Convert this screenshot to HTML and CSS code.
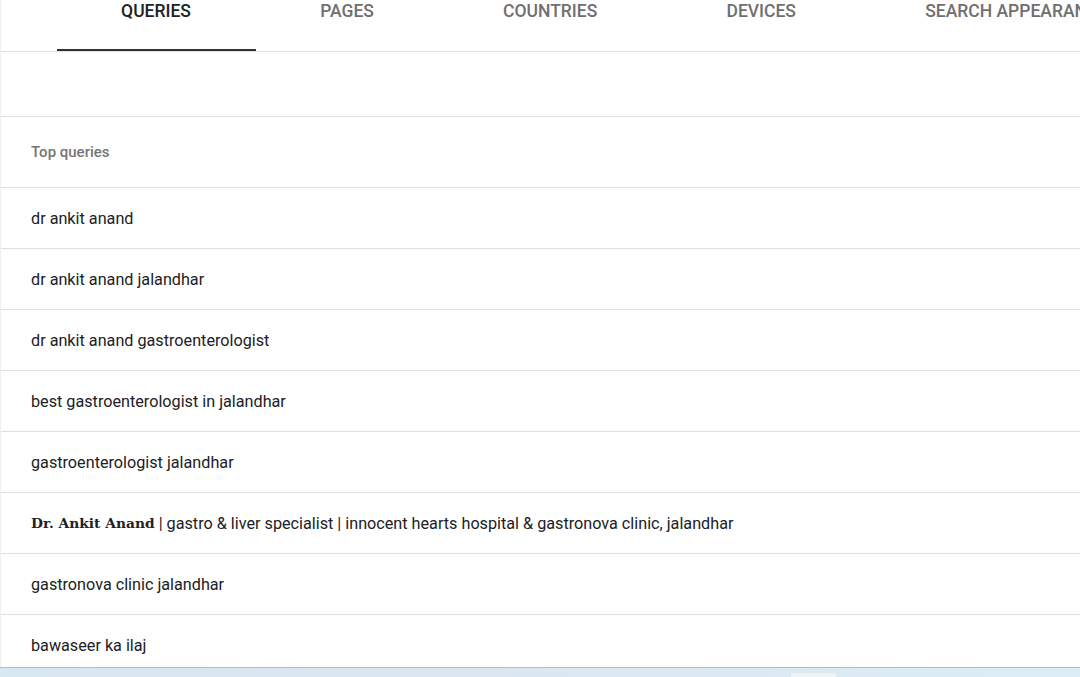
FILE: index.html
```html
<!DOCTYPE html>
<html>
<head>
<meta charset="utf-8">
<link rel="stylesheet" href="styles.css">
</head>
<body>
<div class="page">
  <div class="card">
    <div class="tabs">
      <div class="tab active">QUERIES</div>
      <div class="tab">PAGES</div>
      <div class="tab">COUNTRIES</div>
      <div class="tab">DEVICES</div>
      <div class="tab">SEARCH APPEARANCE</div>
    </div>
    <div class="spacer"></div>
    <div class="row head">Top queries</div>
    <div class="row">dr ankit anand</div>
    <div class="row">dr ankit anand jalandhar</div>
    <div class="row">dr ankit anand gastroenterologist</div>
    <div class="row">best gastroenterologist in jalandhar</div>
    <div class="row">gastroenterologist jalandhar</div>
    <div class="row"><span class="serif">Dr. Ankit Anand</span>&nbsp;| gastro &amp; liver specialist | innocent hearts hospital &amp; gastronova clinic, jalandhar</div>
    <div class="row">gastronova clinic jalandhar</div>
    <div class="row">bawaseer ka ilaj</div>
  </div>
  <div class="taskbar"><div class="tb-item"></div></div>
</div>
</body>
</html>
```
FILE: styles.css
```css
html, body {
  margin: 0;
  padding: 0;
  height: 677px;
  overflow: hidden;
  background: #eef1f4;
  font-family: Roboto, "Noto Sans", Arial, sans-serif;
}
.page {
  display: flex;
  flex-direction: column;
  height: 677px;
}
.card {
  height: 667px;
  margin-left: 1px;
  background: #fff;
  overflow: hidden;
}
.tabs {
  display: flex;
  height: 51px;
  padding-left: 55.5px;
  border-bottom: 1px solid #e0e0e0;
  white-space: nowrap;
}
.tab {
  box-sizing: border-box;
  height: 51px;
  padding: 0 64.6px;
  font-size: 17.5px;
  font-weight: 500;
  line-height: 22px;
  color: #6f6f6f;
  flex: none;
}
.tab.active {
  color: #202124;
  border-bottom: 2px solid #333;
}
.spacer {
  height: 64px;
  border-bottom: 1px solid #e0e0e0;
}
.row {
  display: flex;
  align-items: center;
  height: 60px;
  padding-left: 30px;
  border-bottom: 1px solid #e0e0e0;
  font-size: 16.2px;
  color: #202124;
  white-space: nowrap;
}
.row.head {
  height: 70px;
  font-size: 15px;
  font-weight: 500;
  color: #757575;
}
.serif {
  font-family: "DejaVu Serif", serif;
  font-weight: bold;
  font-size: 13.8px;
}
.taskbar {
  flex: none;
  height: 9px;
  border-top: 1px solid #b4bcc4;
  background: linear-gradient(90deg, #d8e8f3, #dbe6f0 40%, #dcedf5);
  display: flex;
  align-items: flex-end;
}
.tb-item {
  margin-left: 791px;
  width: 45px;
  height: 4px;
  background: #eef5f9;
  border-radius: 3px 3px 0 0;
}
```
